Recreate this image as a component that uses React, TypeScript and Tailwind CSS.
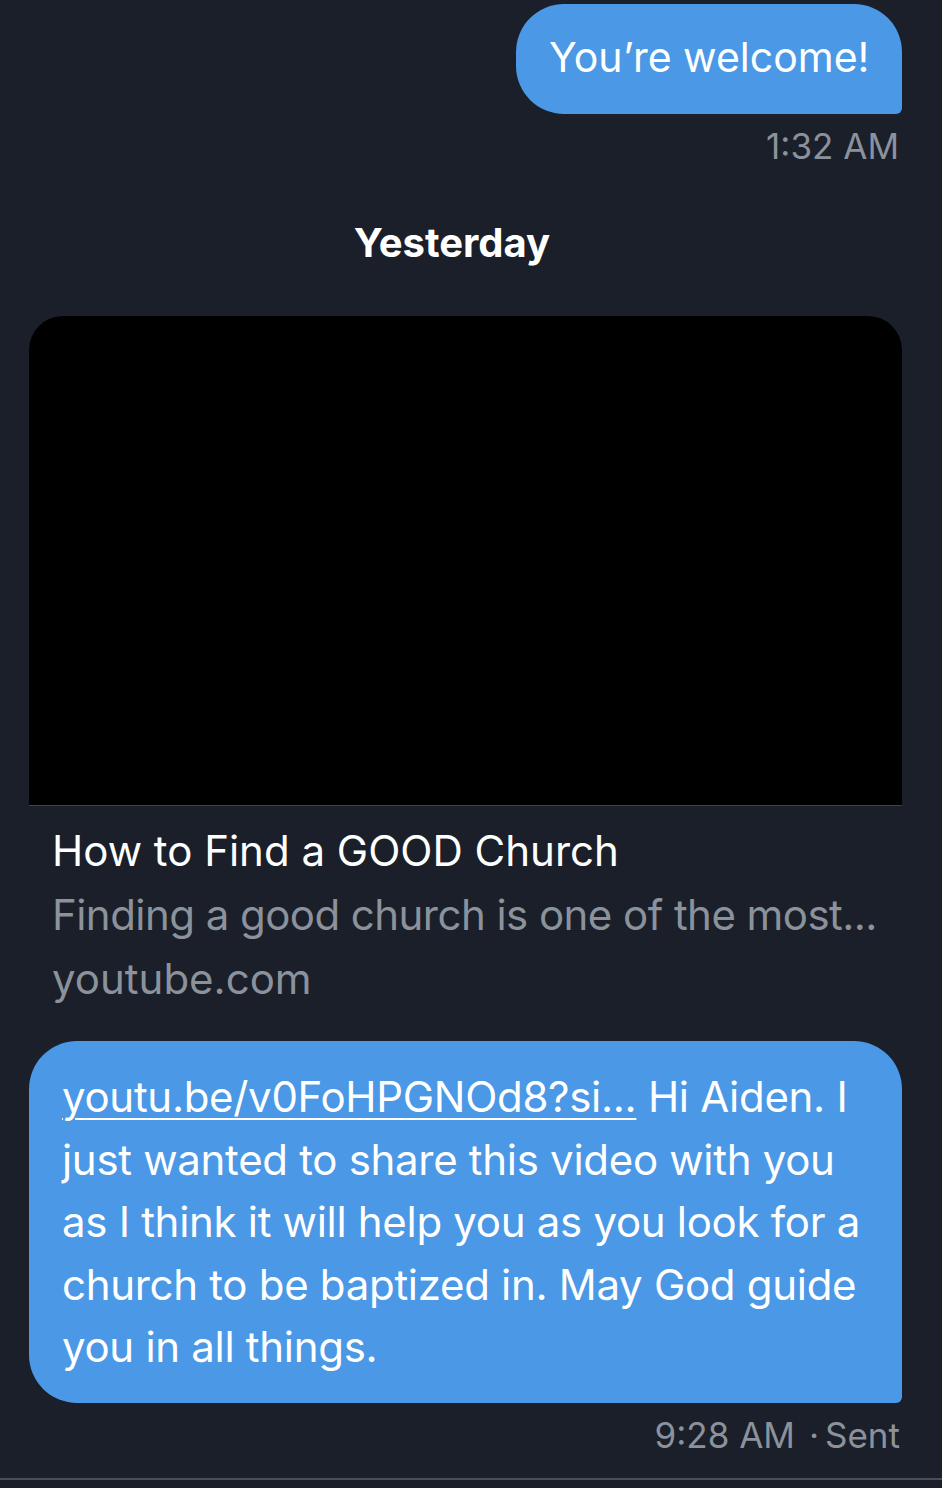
import React from "react";

export default function App() {
  const font = { fontFamily: "Inter, 'Noto Sans', sans-serif" };
  return (
    <div className="w-[942px] h-[1488px] bg-[#1a1f29] overflow-hidden flex flex-col" style={font}>
      <div className="flex justify-end pr-[40px] pt-[4px]">
        <div className="h-[110px] w-[386px] bg-[#4a98e6] rounded-[48px] rounded-br-[6px] flex items-center pl-[33px] pb-[2px] text-white text-[41px]">
          You’re welcome!
        </div>
      </div>
      <div className="flex justify-end pr-[43px] mt-[12px] text-[#8b929b] text-[35px] leading-[40px]">
        1:32 AM
      </div>
      <div className="flex justify-center mt-[55px] text-white text-[40px] font-bold leading-[44px] pr-[38px]">
        Yesterday
      </div>
      <div className="mx-[29px] mt-[51px] mr-[40px] bg-black h-[490px] rounded-t-[34px] border-b-[1.5px] border-[#3c434d]" />
      <div className="ml-[52px] mt-[13px] flex flex-col text-[42px] leading-[64px]">
        <div className="text-white">How to Find a GOOD Church</div>
        <div className="text-[#8b929b] tracking-[-0.55px]">Finding a good church is one of the most...</div>
        <div className="text-[#8b929b]">youtube.com</div>
      </div>
      <div className="ml-[29px] mr-[40px] mt-[30px] h-[362px] bg-[#4a98e6] rounded-[48px] rounded-br-[6px] pl-[33px] pt-[25px] text-white text-[42px] leading-[62.5px] tracking-[-0.3px]">
        <span className="underline decoration-[2px] underline-offset-[6px]">youtu.be/v0FoHPGNOd8?si...</span> Hi Aiden. I
        <br />
        just wanted to share this video with you
        <br />
        as I think it will help you as you look for a
        <br />
        church to be baptized in. May God guide
        <br />
        you in all things.
      </div>
      <div className="flex justify-end items-center pr-[42px] mt-[12px] text-[#8b929b] text-[35px] leading-[40px]">
        <span>9:28 AM</span>
        <span className="ml-[14px]">·</span>
        <span className="ml-[6px]">Sent</span>
      </div>
      <div className="mt-[23px] h-[2px] bg-[#4a4f57]" />
    </div>
  );
}
